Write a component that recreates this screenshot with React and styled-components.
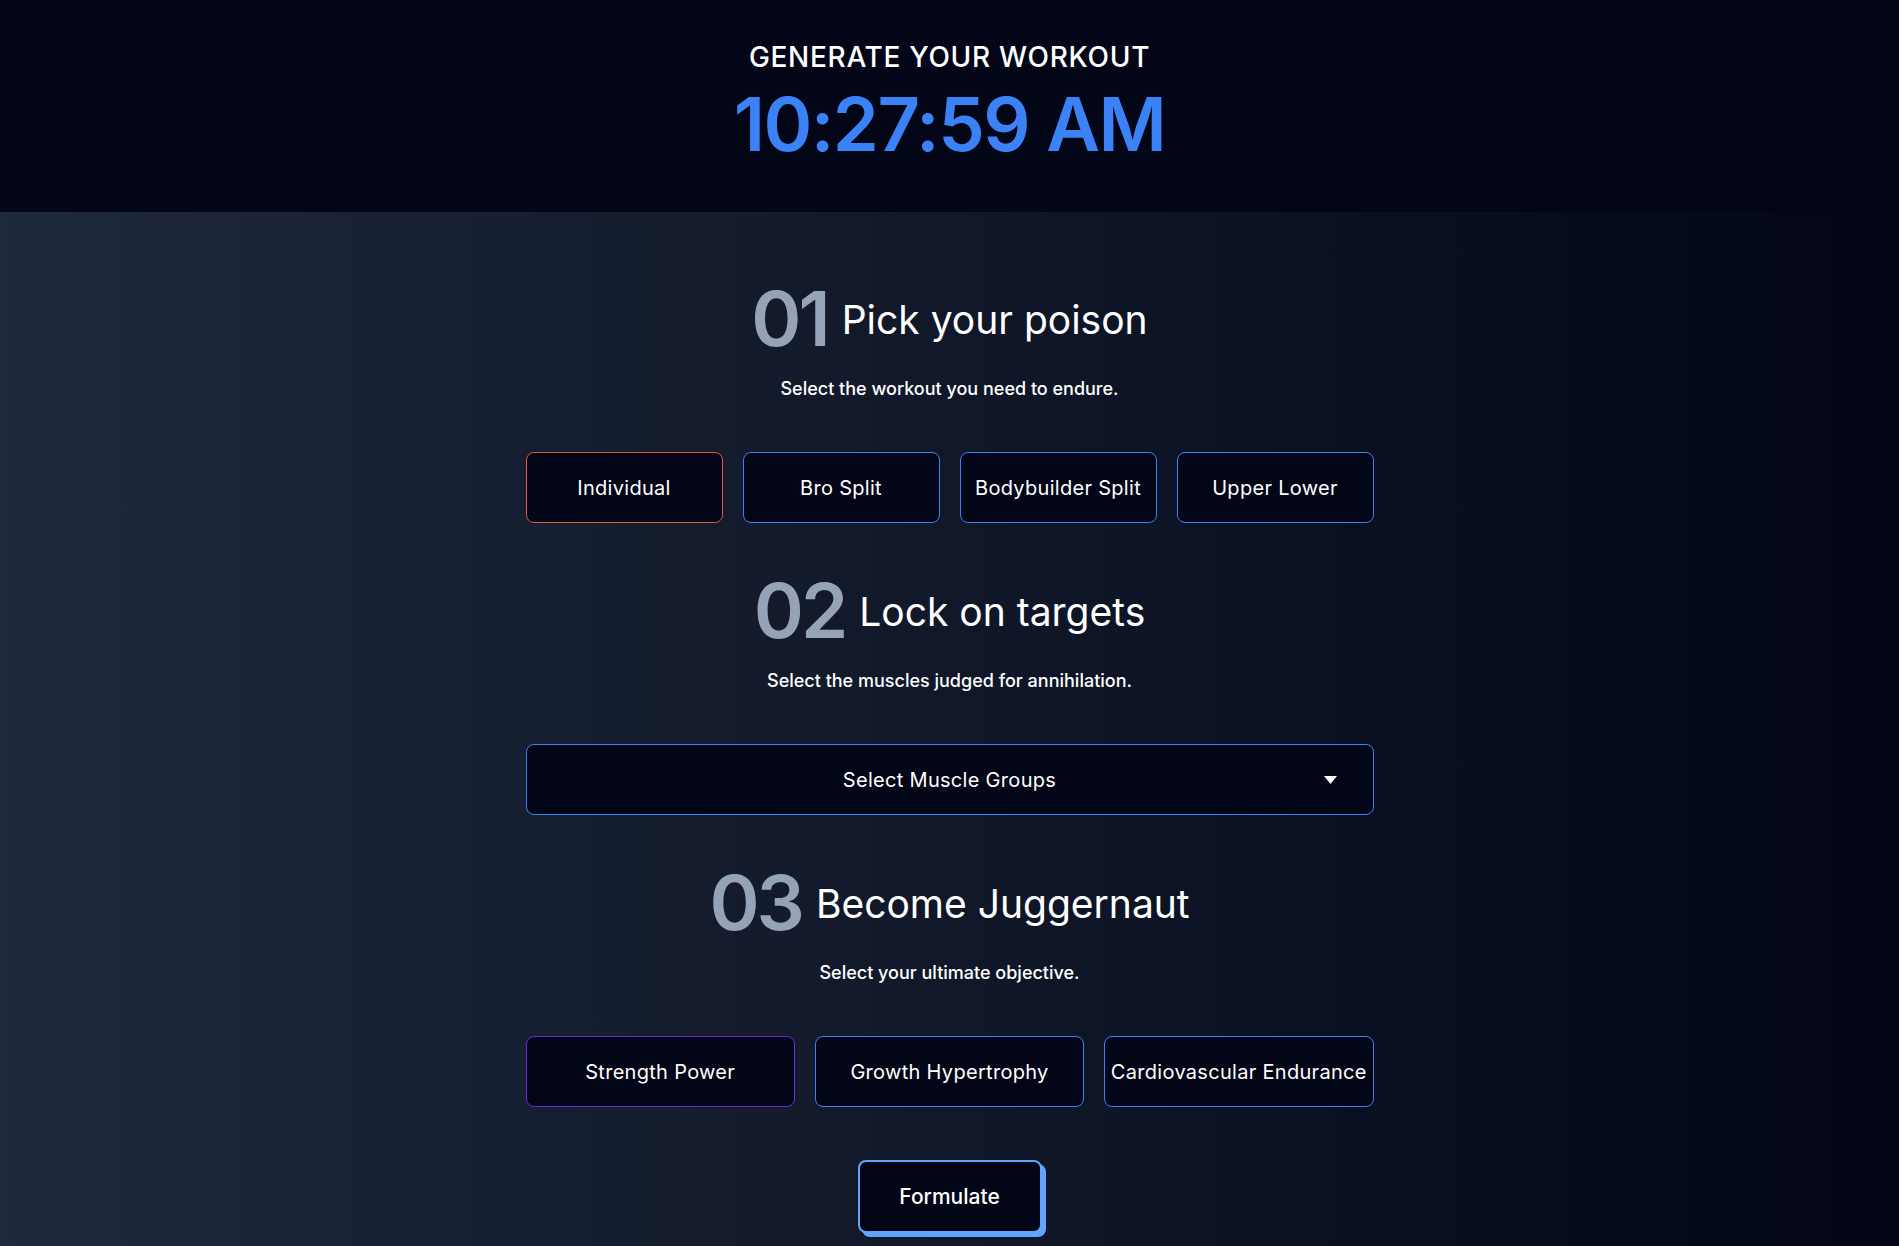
import styled, { createGlobalStyle } from "styled-components";

const GlobalStyle = createGlobalStyle`
  * {
    box-sizing: border-box;
  }
  body {
    margin: 0;
    background: #020617;
    font-family: "Inter", "Open Sans", sans-serif;
    color: #ffffff;
  }
`;

const workouts = ["Individual", "Bro Split", "Bodybuilder Split", "Upper Lower"];
const goals = ["Strength Power", "Growth Hypertrophy", "Cardiovascular Endurance"];

function SectionHeader({ index, title, description }) {
  return (
    <>
      <TitleRow>
        <Number>{index}</Number>
        <Title>{title}</Title>
      </TitleRow>
      <Description>{description}</Description>
    </>
  );
}

function App() {
  return (
    <>
      <GlobalStyle />
      <Page>
        <Header>
          <Eyebrow>GENERATE YOUR WORKOUT</Eyebrow>
          <Clock>10:27:59 AM</Clock>
        </Header>

        <Main>
          <Section>
            <SectionHeader
              index="01"
              title="Pick your poison"
              description="Select the workout you need to endure."
            />
            <OptionGrid $cols={4}>
              {workouts.map((w, i) => (
                <OptionButton key={w} $accent={i === 0 ? "#e5534b" : "#3b82f6"}>
                  {w}
                </OptionButton>
              ))}
            </OptionGrid>
          </Section>

          <Section>
            <SectionHeader
              index="02"
              title="Lock on targets"
              description="Select the muscles judged for annihilation."
            />
            <Dropdown>
              <span>Select Muscle Groups</span>
              <Caret viewBox="0 0 10 6">
                <path d="M0 0h10L5 6z" fill="#ffffff" />
              </Caret>
            </Dropdown>
          </Section>

          <Section>
            <SectionHeader
              index="03"
              title="Become Juggernaut"
              description="Select your ultimate objective."
            />
            <OptionGrid $cols={3}>
              {goals.map((g, i) => (
                <OptionButton key={g} $accent={i === 0 ? "#6d28d9" : "#3b82f6"}>
                  {g}
                </OptionButton>
              ))}
            </OptionGrid>
          </Section>

          <Formulate>Formulate</Formulate>
        </Main>
      </Page>
    </>
  );
}
export default App;

const Page = styled.div`
  min-height: 100vh;
  display: flex;
  flex-direction: column;
`;

const Header = styled.header`
  height: 212px;
  background: #020617;
  display: flex;
  flex-direction: column;
  align-items: center;
  padding-top: 39px;
`;

const Eyebrow = styled.h2`
  margin: 0;
  font-size: 28px;
  font-weight: 500;
  line-height: 36px;
  letter-spacing: 0.7px;
`;

const Clock = styled.h1`
  margin: 8px 0 0;
  font-size: 74px;
  font-weight: 600;
  line-height: 82px;
  color: #3b82f6;
  letter-spacing: -1.5px;
`;

const Main = styled.main`
  flex: 1;
  background: linear-gradient(to right, #1e293b, #020617);
  display: flex;
  flex-direction: column;
  align-items: center;
  padding: 66px 0 40px;
`;

const Section = styled.section`
  width: 848px;
  display: flex;
  flex-direction: column;
  align-items: center;
  margin-bottom: 47px;
`;

const TitleRow = styled.div`
  display: flex;
  align-items: center;
  gap: 14px;
`;

const Number = styled.span`
  font-size: 76px;
  font-weight: 600;
  line-height: 80px;
  color: #94a3b8;
  letter-spacing: -3px;
`;

const Title = styled.span`
  font-size: 39px;
  font-weight: 400;
  line-height: 48px;
  margin-top: 4px;
`;

const Description = styled.p`
  margin: 19px 0 0;
  font-size: 18px;
  font-weight: 500;
  line-height: 24px;
`;

const OptionGrid = styled.div`
  width: 100%;
  margin-top: 51px;
  display: grid;
  grid-template-columns: repeat(${(p) => p.$cols}, 1fr);
  gap: 20px;
`;

const OptionButton = styled.button`
  height: 71px;
  background: #020617;
  border: 1px solid ${(p) => p.$accent};
  border-radius: 8px;
  color: #ffffff;
  font-family: inherit;
  font-size: 20px;
  font-weight: 400;
  letter-spacing: 0.3px;
  padding: 0;
  white-space: nowrap;
  cursor: pointer;
`;

const Dropdown = styled.button`
  position: relative;
  width: 100%;
  height: 71px;
  margin-top: 51px;
  background: #020617;
  border: 1px solid #3b82f6;
  border-radius: 8px;
  color: #ffffff;
  font-family: inherit;
  font-size: 20px;
  letter-spacing: 0.3px;
  display: flex;
  align-items: center;
  justify-content: center;
  cursor: pointer;
`;

const Caret = styled.svg`
  position: absolute;
  right: 36px;
  top: 50%;
  width: 13px;
  height: 8px;
  transform: translateY(-50%);
`;

const Formulate = styled.button`
  width: 184px;
  height: 73px;
  margin-top: 6px;
  background: #020617;
  border: 2px solid #60a5fa;
  border-radius: 8px;
  box-shadow: 4px 4px 0 #60a5fa;
  color: #ffffff;
  font-family: inherit;
  font-size: 21px;
  font-weight: 500;
  cursor: pointer;
`;
